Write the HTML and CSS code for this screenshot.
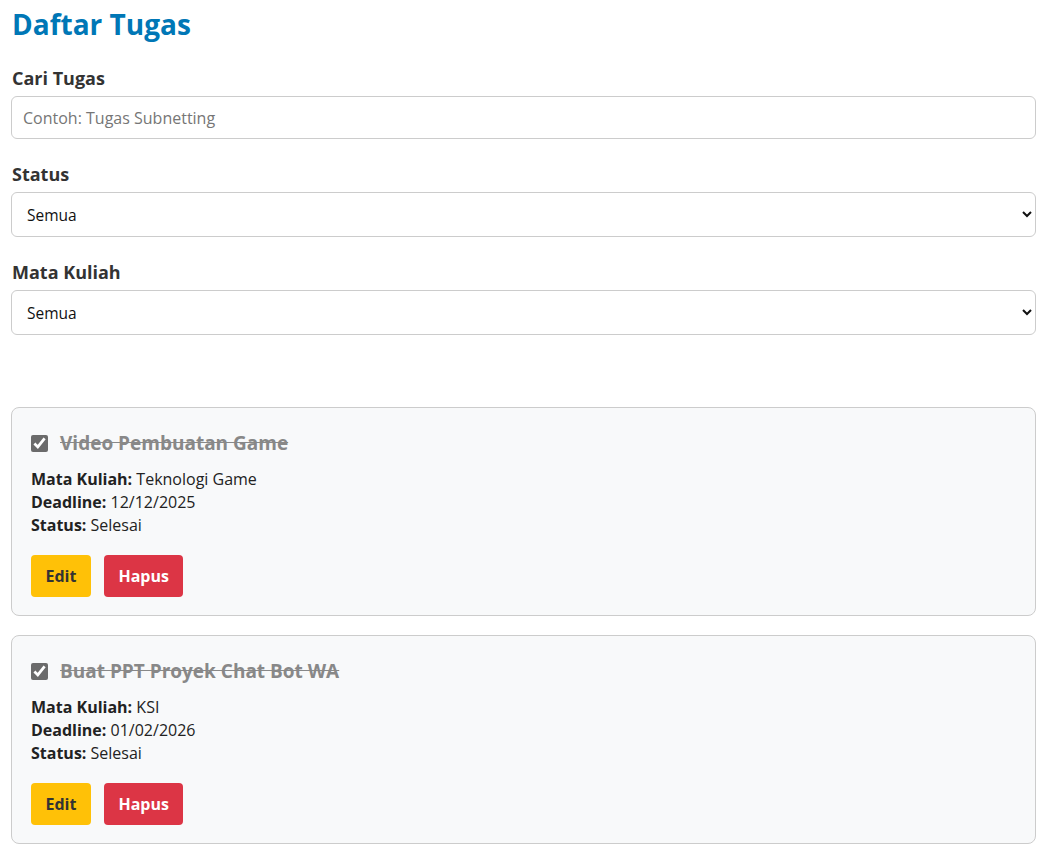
FILE: index.html
```html
<!DOCTYPE html>
<html lang="id">
<head>
<meta charset="utf-8">
<title>Daftar Tugas</title>
<link rel="stylesheet" href="styles.css">
</head>
<body>
<div class="page">
  <h1 class="title">Daftar Tugas</h1>

  <div class="field">
    <label class="field-label" for="cari">Cari Tugas</label>
    <input id="cari" class="text-input" type="text" placeholder="Contoh: Tugas Subnetting">
  </div>

  <div class="field">
    <label class="field-label" for="status">Status</label>
    <select id="status" class="select-input">
      <option>Semua</option>
      <option>Selesai</option>
      <option>Belum Selesai</option>
    </select>
  </div>

  <div class="field">
    <label class="field-label" for="mk">Mata Kuliah</label>
    <select id="mk" class="select-input">
      <option>Semua</option>
      <option>Teknologi Game</option>
      <option>KSI</option>
    </select>
  </div>

  <div class="task-list">
    <div class="task-card">
      <div class="task-head">
        <input class="task-check" type="checkbox" checked>
        <span class="task-title done">Video Pembuatan Game</span>
      </div>
      <div class="task-info">
        <div><strong>Mata Kuliah:</strong> Teknologi Game</div>
        <div><strong>Deadline:</strong> 12/12/2025</div>
        <div><strong>Status:</strong> Selesai</div>
      </div>
      <div class="task-actions">
        <button class="btn btn-edit">Edit</button>
        <button class="btn btn-delete">Hapus</button>
      </div>
    </div>

    <div class="task-card">
      <div class="task-head">
        <input class="task-check" type="checkbox" checked>
        <span class="task-title done">Buat PPT Proyek Chat Bot WA</span>
      </div>
      <div class="task-info">
        <div><strong>Mata Kuliah:</strong> KSI</div>
        <div><strong>Deadline:</strong> 01/02/2026</div>
        <div><strong>Status:</strong> Selesai</div>
      </div>
      <div class="task-actions">
        <button class="btn btn-edit">Edit</button>
        <button class="btn btn-delete">Hapus</button>
      </div>
    </div>
  </div>
</div>
</body>
</html>
```

FILE: styles.css
```css
* { box-sizing: border-box; }

body {
  margin: 0;
  background: #fff;
  color: #222;
  font-family: "Open Sans", "Noto Sans", sans-serif;
}

.page {
  padding: 4px 13px 20px 11px;
}

.title {
  margin: 0 0 22px 1px;
  font-size: 28px;
  font-weight: 700;
  color: #0077b6;
  line-height: 40px;
}

.field {
  margin-bottom: 23px;
}

.field-label {
  display: block;
  margin: 0 0 6px 1px;
  font-size: 18px;
  font-weight: 700;
  color: #333;
  line-height: 24px;
}

.text-input {
  display: block;
  width: 100%;
  height: 43px;
  padding: 0 11px;
  border: 1px solid #ccc;
  border-radius: 6px;
  font: 16px "Open Sans", sans-serif;
  color: #333;
  background: #fff;
}

.text-input::placeholder { color: #767676; }

.select-input {
  display: block;
  width: 100%;
  height: 45px;
  padding: 0 11px;
  border: 1px solid #ccc;
  border-radius: 6px;
  font: 15.5px "Open Sans", sans-serif;
  color: #111;
  background: #fff;
}

.task-list {
  margin-top: 72px;
  display: flex;
  flex-direction: column;
  gap: 19px;
}

.task-card {
  background: #f8f9fa;
  border: 1px solid #ccc;
  border-radius: 8px;
  padding: 20px 19px 18px 19px;
}

.task-head {
  display: flex;
  align-items: center;
  gap: 12px;
  height: 30px;
  margin-bottom: 10px;
}

.task-check {
  margin: 0;
  width: 17px;
  height: 17px;
  accent-color: #6b6b6b;
}

.task-title {
  font-size: 19px;
  font-weight: 700;
}

.task-title.done {
  color: #888;
  text-decoration: line-through;
}

.task-info {
  font-size: 16px;
  line-height: 23px;
  color: #222;
}

.task-info strong { color: #222; }

.task-actions {
  display: flex;
  gap: 13px;
  margin-top: 18px;
}

.btn {
  height: 42px;
  padding: 0 14.5px;
  border: none;
  border-radius: 4px;
  font: 700 16px "Open Sans", sans-serif;
  cursor: pointer;
}

.btn-edit {
  background: #ffc107;
  color: #333;
}

.btn-delete {
  background: #dc3545;
  color: #fff;
}
```
